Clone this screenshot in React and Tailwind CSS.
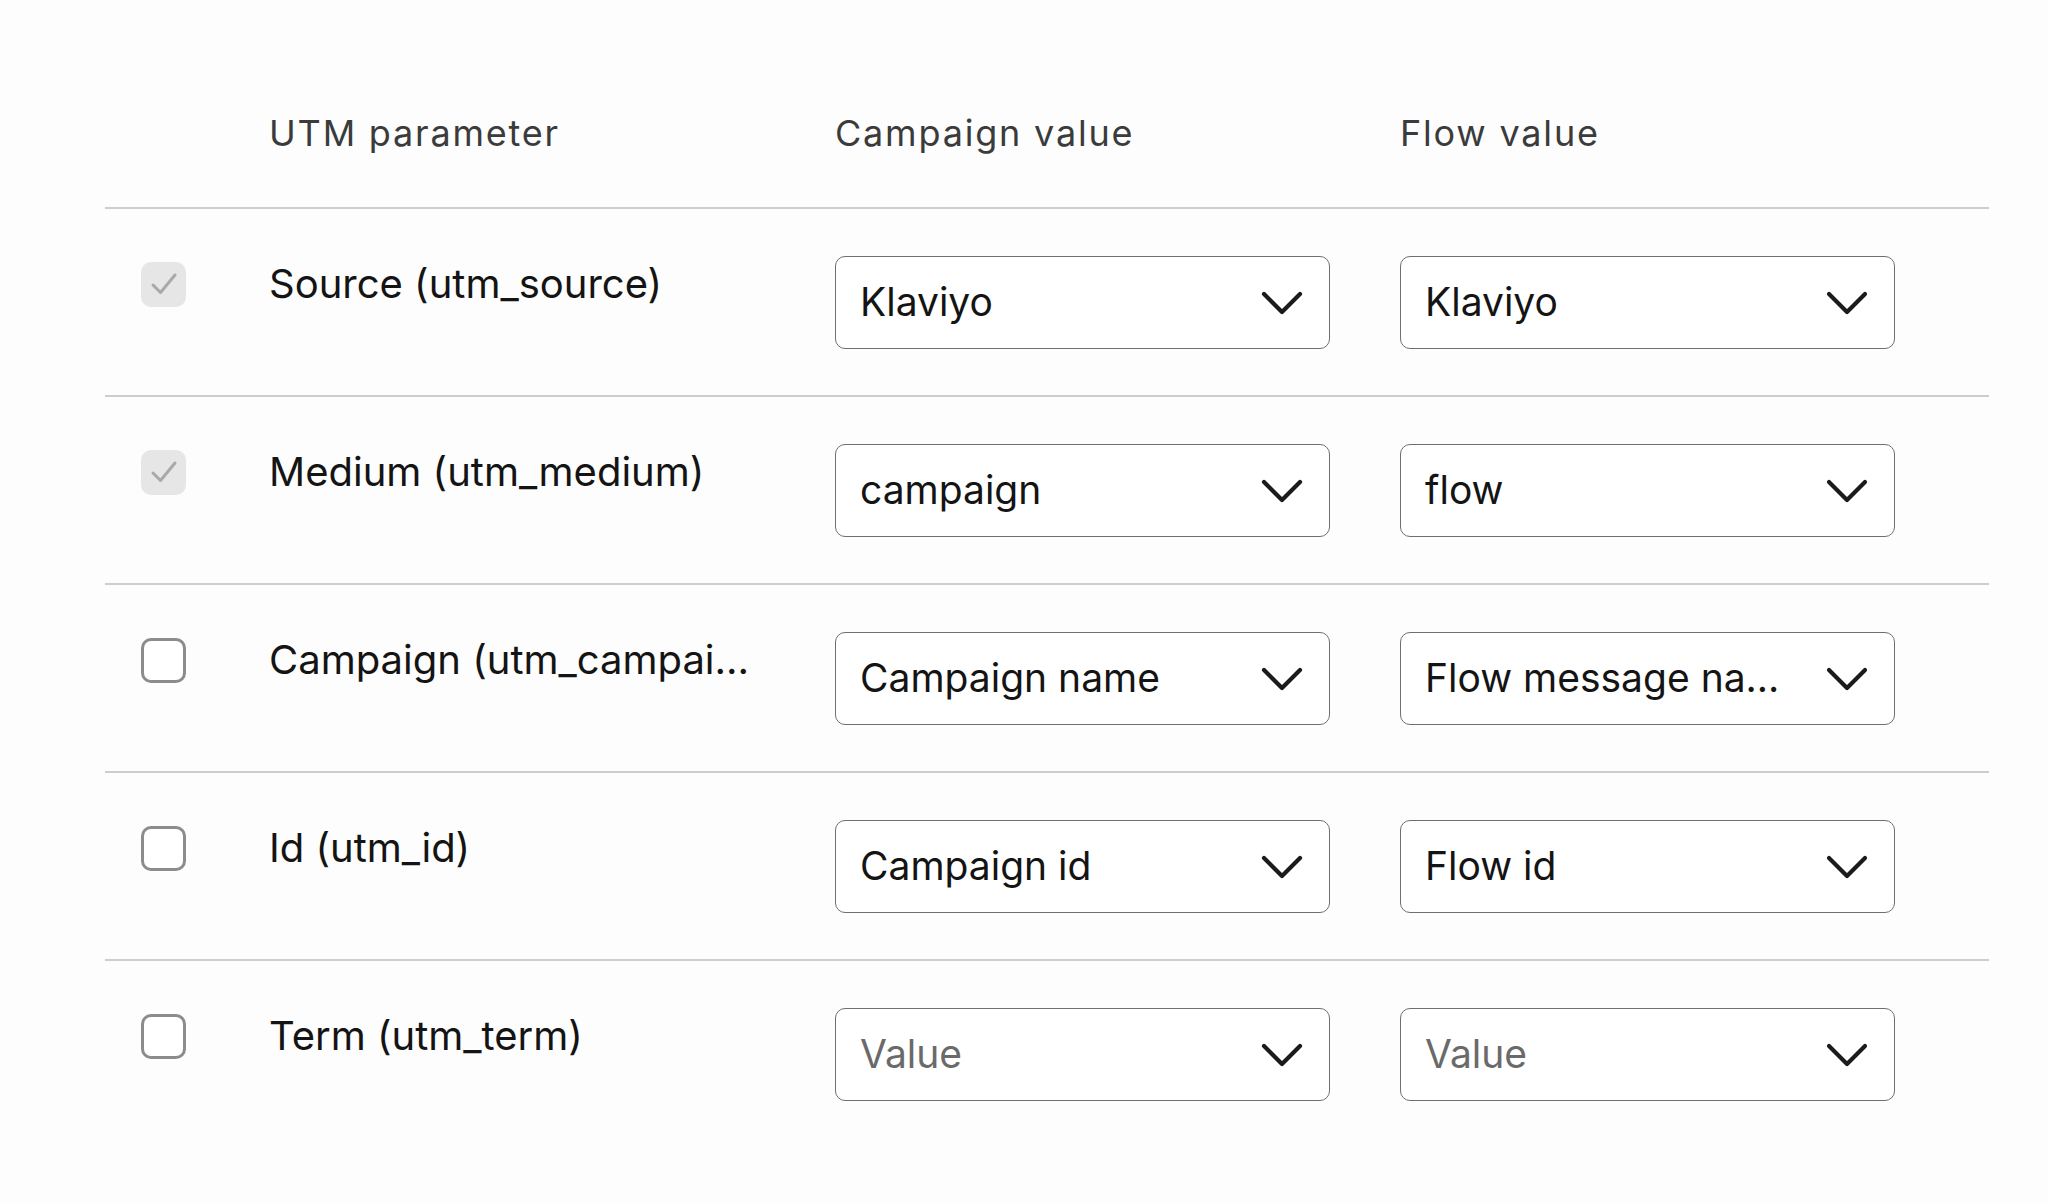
const rows = [
  { label: "Source (utm_source)", campaign: "Klaviyo", flow: "Klaviyo", checked: true },
  { label: "Medium (utm_medium)", campaign: "campaign", flow: "flow", checked: true },
  { label: "Campaign (utm_campai...", campaign: "Campaign name", flow: "Flow message na...", checked: false },
  { label: "Id (utm_id)", campaign: "Campaign id", flow: "Flow id", checked: false },
  { label: "Term (utm_term)", campaign: "", flow: "", checked: false },
];

function Chevron() {
  return (
    <svg className="h-[26px] w-[42px] shrink-0" viewBox="0 0 42 26" fill="none">
      <path d="M3 4 L21 22 L39 4" stroke="#1b1b1b" strokeWidth="4.2" strokeLinecap="round" strokeLinejoin="round" />
    </svg>
  );
}

function Checkbox({ checked }) {
  if (checked) {
    return (
      <div className="flex h-[45px] w-[45px] items-center justify-center rounded-[10px] bg-[#e6e6e6]">
        <svg className="h-[26px] w-[28px]" viewBox="0 0 28 26" fill="none">
          <path d="M3 14 L10.5 21.5 L25 4" stroke="#a9a9a9" strokeWidth="3" strokeLinecap="round" strokeLinejoin="round" />
        </svg>
      </div>
    );
  }
  return <div className="h-[45px] w-[45px] rounded-[10px] border-[3px] border-[#8c8c8c] bg-white" />;
}

function Select({ value }) {
  return (
    <div className="flex h-[93px] w-[495px] items-center justify-between rounded-[10px] border-[1.5px] border-[#6f6f6f] bg-white pl-[24px] pr-[26px] text-[39px]">
      <span className={value ? "text-[#141414]" : "text-[#6a6a6a]"}>{value || "Value"}</span>
      <Chevron />
    </div>
  );
}

export default function App() {
  return (
    <main className="min-h-screen bg-[#fdfdfd] font-['Inter','Liberation_Sans',sans-serif]">
      <div className="ml-[105px] w-[1884px]">
        <div className="grid grid-cols-[164px_566px_565px_1fr] border-b-2 border-[#cdcdcd] pb-[52px] pt-[111px] text-[36px] leading-[44px] tracking-[1.8px] text-[#3b3b3b]">
          <div />
          <div>UTM parameter</div>
          <div>Campaign value</div>
          <div>Flow value</div>
        </div>
        {rows.map((row, i) => (
          <div
            key={row.label}
            className={
              "grid grid-cols-[164px_566px_565px_1fr] pb-[46px] pt-[47px] " +
              (i < rows.length - 1 ? "border-b-2 border-[#cdcdcd]" : "")
            }
          >
            <div className="flex h-[56px] items-center pl-[36px]">
              <Checkbox checked={row.checked} />
            </div>
            <div className="text-[40px] leading-[56px] text-[#141414]">{row.label}</div>
            <div>
              <Select value={row.campaign} />
            </div>
            <div>
              <Select value={row.flow} />
            </div>
          </div>
        ))}
      </div>
    </main>
  );
}
